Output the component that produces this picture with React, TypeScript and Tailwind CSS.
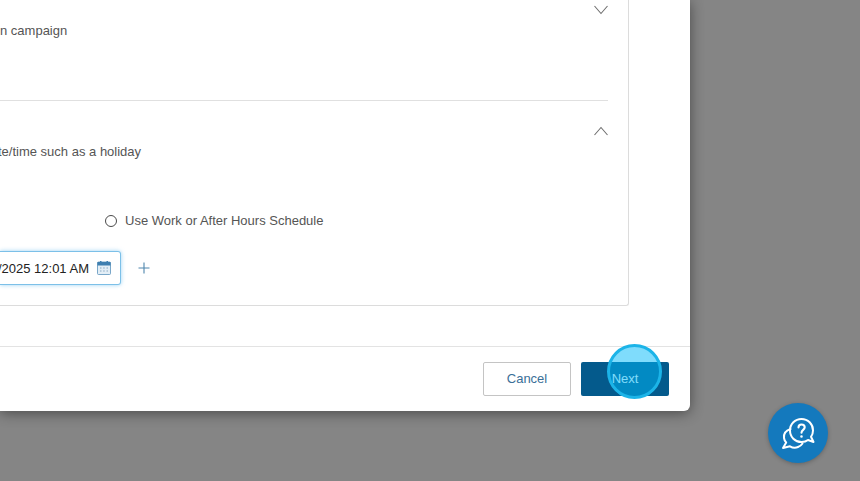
const App = () => {
  return (
    <div className="relative flex h-[481px] w-[860px] items-start overflow-hidden bg-[#858585] font-['Helvetica','Liberation_Sans',Arial,sans-serif] text-[13px] text-[#555]">
      <div className="flex h-[411px] w-[690px] flex-col rounded-br-[6px] bg-white shadow-[0_2px_14px_rgba(0,0,0,0.45)]">
        <div className="h-[346px] shrink-0">
          <div className="flex h-[306px] w-[629px] flex-col rounded-br-[3px] border-r border-b border-[#dcdcdc] pr-5">
            <div className="relative h-[101px] shrink-0 border-b border-[#e0e0e0]">
              <p className="pt-[22px] leading-[17px] whitespace-nowrap">n campaign</p>
              <svg className="absolute top-[4px] right-[0px] h-3 w-[14px]" viewBox="0 0 14 12" fill="none" stroke="#6f6f6f" strokeWidth="1.1">
                <path d="M0.5 2 L7 9.5 L13.5 2" />
              </svg>
            </div>
            <div className="relative flex-1">
              <p className="ml-[-2px] pt-[42px] leading-[17px] whitespace-nowrap">te/time such as a holiday</p>
              <svg className="absolute top-[24px] right-[0px] h-3 w-[14px]" viewBox="0 0 14 12" fill="none" stroke="#6f6f6f" strokeWidth="1.1">
                <path d="M0.5 10 L7 2.5 L13.5 10" />
              </svg>
              <label className="mt-[52px] ml-[105px] flex h-[17px] items-center gap-[8px] whitespace-nowrap">
                <span className="h-[12px] w-[12px] rounded-full border border-[#4a4a4a] bg-white"></span>
                Use Work or After Hours Schedule
              </label>
              <div className="mt-[22px] flex items-center">
                <div className="flex h-[34px] w-[121px] items-center justify-end gap-[8px] overflow-hidden rounded-r-[3px] border border-l-0 border-[#7cc0e8] pr-[9px] whitespace-nowrap text-[#222] shadow-[0_0_4px_rgba(90,180,235,0.6)]">
                  <span className="pt-px">/2025 12:01 AM</span>
                  <svg className="h-[14px] w-[14px] shrink-0" viewBox="0 0 14 14">
                    <rect x="0.5" y="1" width="13" height="12.5" rx="1" fill="#e3eef6" stroke="#5b93bd" strokeWidth="0.8" />
                    <rect x="0.5" y="1" width="13" height="3.5" fill="#3f7fb0" />
                    <rect x="3" y="0" width="1.5" height="2" fill="#3f7fb0" />
                    <rect x="9.5" y="0" width="1.5" height="2" fill="#3f7fb0" />
                    <path d="M3 7h1.5M6.2 7h1.5M9.5 7h1.5M3 10h1.5M6.2 10h1.5M9.5 10h1.5" stroke="#8aa9c2" strokeWidth="1.2" />
                  </svg>
                </div>
                <svg className="ml-[17px] h-3 w-3" viewBox="0 0 12 12" stroke="#4f86ad" strokeWidth="1.1">
                  <path d="M6 0.5V11.5M0.5 6H11.5" />
                </svg>
              </div>
            </div>
          </div>
        </div>
        <div className="flex flex-1 items-start justify-end gap-[10px] border-t border-[#e3e3e3] pt-[15px] pr-[21px]">
          <button className="h-[34px] w-[88px] rounded-[2px] border border-[#c4c4c4] bg-white text-[#3a6f98]">Cancel</button>
          <button className="h-[34px] w-[88px] rounded-[2px] bg-[#045a8c] text-white">Next</button>
        </div>
      </div>

      {/* click highlight over Next */}
      <div className="absolute top-[344px] left-[607px] h-[55px] w-[55px] rounded-full border-[3px] border-[#1cb4e8] bg-[rgba(0,185,250,0.5)]"></div>

      {/* help bubble */}
      <div className="absolute top-[403px] left-[768px] flex h-[60px] w-[60px] items-center justify-center rounded-full bg-[#1479bd] shadow-[0_1px_4px_rgba(0,0,0,0.25)]">
        <svg className="h-[36px] w-[36px]" viewBox="0 0 36 36" fill="none" stroke="white" strokeWidth="2" strokeLinejoin="round" strokeLinecap="round">
          <path d="M10.5 14 C6 15.5 3.5 19 4 23 C4.3 25 5 26.5 6.2 27.6 L3 33 L10 31.3 C12.5 32.8 15.5 33 18 32 C20 31.3 21.5 30 22.5 28.5" />
          <path d="M21.5 4 C15 4 10 9 10 15.5 C10 22 15 27 21.5 27 C24.3 27 26.5 26.2 28 25 L33.5 27 L31 21.8 C32.3 20 33 18 33 15.5 C33 9 28 4 21.5 4 Z" />
          <path d="M18.5 12.5 C18.5 10.5 19.8 9.5 21.5 9.5 C23.3 9.5 24.7 10.6 24.7 12.3 C24.7 14.8 21.5 15 21.5 17.8" strokeWidth="2.1" />
          <circle cx="21.5" cy="21.5" r="0.6" fill="white" strokeWidth="1.4" />
        </svg>
      </div>
    </div>
  );
};

export default App;
